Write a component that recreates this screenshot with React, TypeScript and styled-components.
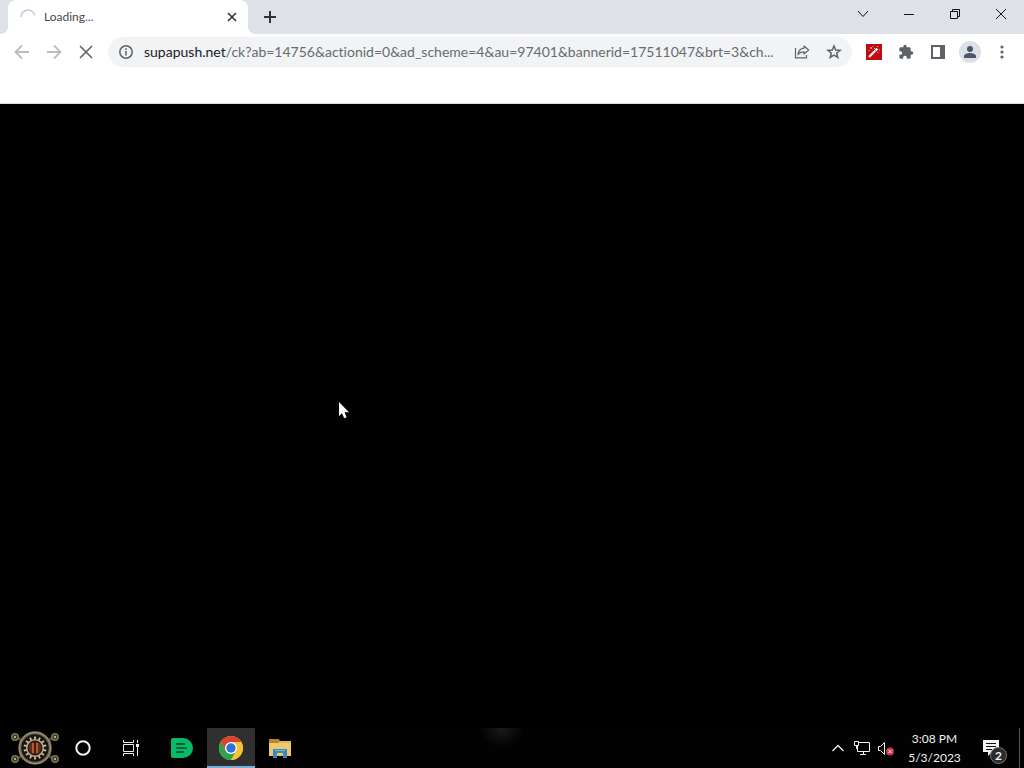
import React from "react";
import styled, { createGlobalStyle } from "styled-components";

const GlobalStyle = createGlobalStyle`
  *, *::before, *::after { box-sizing: border-box; }
  body {
    margin: 0;
    background: #000;
    font-family: Lato, "Open Sans", sans-serif;
    font-variant-ligatures: none;
  }
  button, input { font: inherit; color: inherit; font-variant-ligatures: none; }
`;

const Screen = styled.div`
  display: flex;
  flex-direction: column;
  min-height: 100vh;
`;

const TabStrip = styled.header`
  display: flex;
  align-items: stretch;
  height: 34px;
  padding-left: 8px;
  background: #dee1e6;
`;

const Tab = styled.div`
  position: relative;
  display: flex;
  align-items: center;
  gap: 8px;
  width: 240px;
  padding: 0 8px 0 12px;
  border-radius: 8px 8px 0 0;
  background: #fff;
  color: #45484c;
  font-size: 12px;
  line-height: 16px;

  &::before,
  &::after {
    content: "";
    position: absolute;
    bottom: 0;
    width: 8px;
    height: 8px;
  }
  &::before {
    right: 100%;
    background: radial-gradient(circle at 0 0, transparent 8px, #fff 8px);
  }
  &::after {
    left: 100%;
    background: radial-gradient(circle at 100% 0, transparent 8px, #fff 8px);
  }
`;

const TabTitle = styled.span`
  flex: 1;
`;

const IconButton = styled.button<{ $size?: number; $color?: string }>`
  display: flex;
  flex: none;
  align-items: center;
  justify-content: center;
  width: ${(p) => p.$size ?? 28}px;
  height: ${(p) => p.$size ?? 28}px;
  padding: 0;
  border: 0;
  border-radius: 50%;
  background: none;
  color: ${(p) => p.$color ?? "#5f6368"};
`;

const NewTab = styled(IconButton)`
  align-self: center;
  margin-left: 8px;
`;

const WindowControls = styled.div`
  display: flex;
  height: 28px;
  margin-left: auto;
`;

const WindowButton = styled.button`
  display: flex;
  align-items: center;
  justify-content: center;
  width: 46px;
  padding: 0;
  border: 0;
  background: none;
  color: #111;
`;

const Toolbar = styled.nav`
  display: flex;
  align-items: center;
  gap: 4px;
  height: 36px;
  padding: 0 8px;
  background: #fff;
`;

const Omnibox = styled.form`
  display: flex;
  flex: 1;
  align-items: center;
  gap: 4px;
  min-width: 0;
  height: 30px;
  margin: 0 4px;
  padding: 0 4px;
  border-radius: 15px;
  background: #f1f3f4;
`;

const Address = styled.div`
  display: flex;
  flex: 1;
  align-items: center;
  min-width: 0;
  font-size: 14px;
  line-height: 20px;
`;

const Host = styled.label`
  color: #202124;
`;

const Path = styled.input`
  flex: 1;
  min-width: 0;
  height: 20px;
  padding: 0;
  border: 0;
  outline: 0;
  background: none;
  color: #686c70;
  text-overflow: ellipsis;
`;

const BookmarksBar = styled.div`
  height: 34px;
  background: #fff;
  border-bottom: 1px solid #dadce0;
`;

const Page = styled.main`
  position: relative;
  flex: 1;
  background: #000;
`;

const Pointer = styled.svg`
  position: absolute;
  left: 338px;
  top: 297px;
`;

const Taskbar = styled.footer`
  display: flex;
  height: 40px;
  background: radial-gradient(ellipse 22px 20px at 49% 0, #1b1a18, transparent) #020202;
  color: #f2f2f2;
`;

const TaskButton = styled.button<{ $width?: number; $active?: boolean }>`
  display: flex;
  flex: none;
  align-items: center;
  justify-content: center;
  width: ${(p) => p.$width ?? 48}px;
  padding: 0;
  border: 0;
  background: ${(p) => (p.$active ? "#303030" : "none")};
  box-shadow: ${(p) => (p.$active ? "inset 0 -2px #76aee0" : "none")};
`;

const StartButton = styled(TaskButton)`
  justify-content: flex-end;
`;

const Apps = styled.div`
  display: flex;
  gap: 1px;
  padding-left: 3px;
`;

const Tray = styled.div`
  display: flex;
  margin-left: auto;
`;

const Clock = styled(TaskButton)`
  flex-direction: column;
  font-size: 12px;
  line-height: 19px;
`;

const ShowDesktop = styled.button`
  width: 5px;
  padding: 0;
  border: 0;
  border-left: 1px solid #555;
  background: none;
`;

const Notice = styled.span`
  position: relative;
  display: flex;
  width: 24px;
  height: 18px;
`;

const Badge = styled.span`
  position: absolute;
  right: 0;
  bottom: -7px;
  width: 17px;
  height: 17px;
  border: 1px solid #777;
  border-radius: 50%;
  background: #2b2b2b;
  font-size: 12px;
  font-weight: 700;
  line-height: 15px;
  text-align: center;
`;

const stroke = (width: number) => ({
  fill: "none",
  stroke: "currentColor",
  strokeWidth: width,
});

const Spinner = () => (
  <svg width="16" height="16" viewBox="0 0 16 16" fill="none" stroke="#c6cce0" strokeWidth="1.6">
    <path d="M1 8A7 7 0 0 1 14.8 6.4" />
  </svg>
);

const Cross = ({ size, width }: { size: number; width: number }) => (
  <svg width={size} height={size} viewBox={`0 0 ${size} ${size}`} {...stroke(width)}>
    <path d={`M1 1L${size - 1} ${size - 1}M${size - 1} 1L1 ${size - 1}`} />
  </svg>
);

const Arrow = ({ forward }: { forward?: boolean }) => (
  <svg width="16" height="16" viewBox="0 0 16 16" {...stroke(1.8)}>
    <path d={forward ? "M1 8H14M8 1.5L14.5 8L8 14.5" : "M15 8H2M8 1.5L1.5 8L8 14.5"} />
  </svg>
);

const StartGear = () => {
  const teeth = Array.from({ length: 14 }, (_, i) => (i * 360) / 14);
  const bolts = [[5, 6], [45, 6], [5, 28], [45, 28]];
  return (
    <svg width="50" height="36" viewBox="-1 -1 50 36" fill="none">
      <path d="M6 6L44 28M44 6L6 28" stroke="#4b4534" strokeWidth="3" />
      {bolts.map(([x, y]) => (
        <g key={`${x}-${y}`}>
          <circle cx={x} cy={y} r="3.2" fill="#343321" stroke="#777755" strokeWidth="1.5" />
          <circle cx={x} cy={y} r="1.2" fill="#b6ad82" />
        </g>
      ))}
      <circle cx="25" cy="17" r="15.2" fill="#171411" stroke="#746955" strokeWidth="3" />
      <circle cx="25" cy="17" r="15.8" stroke="#a4987f" strokeWidth="1" />
      <g stroke="#cdbf9e" strokeWidth="1.8">
        {teeth.map((a) => (
          <path key={a} d="M25 5.5V9" transform={`rotate(${a} 25 17)`} />
        ))}
      </g>
      <circle cx="25" cy="17" r="8.3" stroke="#b5a580" strokeWidth="1.6" />
      <circle cx="25" cy="17" r="6.4" fill="#5e2c1c" />
      <path d="M23 12V22M27 12V22" stroke="#b8582f" strokeWidth="2" />
      <path d="M25 10.500V23.500" stroke="#241411" strokeWidth="1.2" />
    </svg>
  );
};

const ChromeLogo = () => (
  <svg width="24" height="24" viewBox="0 0 24 24">
    <circle cx="12" cy="12" r="12" fill="#f5c334" />
    <path d="M1.61 6A12 12 0 0 1 22.39 6H12L6.8 15Z" fill="#d84432" />
    <path d="M1.61 6A12 12 0 0 0 12 24L17.2 15H6.8Z" fill="#2fa14f" />
    <path d="M12 24A12 12 0 0 0 22.39 6H12L17.2 15Z" fill="#f5c334" />
    <circle cx="12" cy="12" r="6" fill="#fff" />
    <circle cx="12" cy="12" r="4.7" fill="#2f72d8" />
  </svg>
);

export default function App() {
  return (
    <>
      <GlobalStyle />
      <Screen>
        <TabStrip>
          <Tab>
            <Spinner />
            <TabTitle>Loading...</TabTitle>
            <IconButton $size={16} $color="#303236" aria-label="Close tab">
              <Cross size={10} width={1.6} />
            </IconButton>
          </Tab>
          <NewTab $color="#303236" aria-label="New tab">
            <svg width="12" height="12" viewBox="0 0 12 12" {...stroke(2)}>
              <path d="M6 0V12M0 6H12" />
            </svg>
          </NewTab>
          <WindowControls>
            <WindowButton aria-label="Search tabs">
              <svg width="12" height="8" viewBox="0 0 12 8" {...stroke(1)}>
                <path d="M1 1L6 6.5L11 1" />
              </svg>
            </WindowButton>
            <WindowButton aria-label="Minimize">
              <svg width="10" height="2" viewBox="0 0 10 2" {...stroke(1)}>
                <path d="M0 1.5H10" />
              </svg>
            </WindowButton>
            <WindowButton aria-label="Restore">
              <svg width="10" height="10" viewBox="0 0 10 10" {...stroke(1)}>
                <path d="M0.5 2.5H7.5V9.5H0.5ZM2.5 2.5V0.5H9.5V7.5H7.5" />
              </svg>
            </WindowButton>
            <WindowButton aria-label="Close">
              <Cross size={12} width={1} />
            </WindowButton>
          </WindowControls>
        </TabStrip>

        <Toolbar>
          <IconButton $color="#bdbdbd" aria-label="Back"><Arrow /></IconButton>
          <IconButton $color="#bdbdbd" aria-label="Forward"><Arrow forward /></IconButton>
          <IconButton aria-label="Stop loading"><Cross size={14} width={1.6} /></IconButton>
          <Omnibox onSubmit={(e) => e.preventDefault()}>
            <IconButton type="button" aria-label="Site information">
              <svg width="14" height="14" viewBox="0 0 14 14" {...stroke(1.5)}>
                <circle cx="7" cy="7" r="6.2" />
                <path d="M7 6V10.5M7 3.3V5" />
              </svg>
            </IconButton>
            <Address>
              <Host htmlFor="address">supapush.net</Host>
              <Path
                id="address"
                defaultValue="/ck?ab=14756&actionid=0&ad_scheme=4&au=97401&bannerid=17511047&brt=3&ch..."
              />
            </Address>
            <IconButton type="button" aria-label="Share">
              <svg width="16" height="16" viewBox="0 0 16 16" {...stroke(1.2)}>
                <path d="M1.5 4V13.8H12.5V11" />
                <path d="M10 2L14.7 6L10 10V7.8C7.2 7.8 5.4 8.6 4 10.8C4.4 7.2 6.4 4.6 10 4.2Z" strokeLinejoin="round" />
              </svg>
            </IconButton>
            <IconButton type="button" aria-label="Bookmark">
              <svg width="16" height="16" viewBox="0 0 16 16" {...stroke(1.5)}>
                <path d="M8 2L9.7 6.1L14.1 6.4L10.7 9.2L11.8 13.5L8 11.2L4.2 13.5L5.3 9.2L1.9 6.4L6.3 6.1Z" />
              </svg>
            </IconButton>
          </Omnibox>
          <IconButton aria-label="Magic wand extension">
            <svg width="16" height="16" viewBox="0 0 16 16">
              <path d="M0 0H16V16H0Z" fill="#bd0d12" />
              <path d="M3 13L9.5 6.5" stroke="#ffe8d2" strokeWidth="2.4" />
              <path d="M9.7 6.3L11.3 4.7" stroke="#fff" strokeWidth="2.4" />
              <path d="M4 4H6M5 3V5M7 2V3M8 4L9 5M12 2L11 3M13 6H14M12 8V9M3 6V7" stroke="#f4a49c" strokeWidth="1" />
            </svg>
          </IconButton>
          <IconButton aria-label="Extensions">
            <svg width="16" height="16" viewBox="0 0 24 24" fill="currentColor">
              <path d="M20.5 11H19V7c0-1.1-.9-2-2-2h-4V3.500a2.500 2.500 0 0 0-5 0V5H4c-1.100 0-1.990.9-1.990 2v3.800H3.500c1.490 0 2.700 1.210 2.700 2.700s-1.210 2.700-2.700 2.700H2V20c0 1.100.9 2 2 2h3.800v-1.500c0-1.490 1.210-2.700 2.700-2.700s2.700 1.210 2.700 2.700V22H17c1.100 0 2-.9 2-2v-4h1.500a2.500 2.500 0 0 0 0-5z" />
            </svg>
          </IconButton>
          <IconButton aria-label="Side panel">
            <svg width="14" height="14" viewBox="0 0 14 14">
              <path d="M1 1H13V13H1Z" fill="#fff" stroke="#5f6368" strokeWidth="2" />
              <path d="M9 0H14V14H9Z" fill="#5f6368" />
            </svg>
          </IconButton>
          <IconButton aria-label="Profile">
            <svg width="22" height="22" viewBox="0 0 22 22">
              <circle cx="11" cy="11" r="11" fill="#dde0e6" />
              <g fill="#4b5667">
                <circle cx="11" cy="8" r="3" />
                <path d="M5 17V15C5 12.900 9 12 11 12S17 12.900 17 15V17Z" />
              </g>
            </svg>
          </IconButton>
          <IconButton aria-label="Menu">
            <svg width="4" height="14" viewBox="0 0 4 14" fill="currentColor">
              <circle cx="2" cy="2" r="1.600" />
              <circle cx="2" cy="7" r="1.600" />
              <circle cx="2" cy="12" r="1.600" />
            </svg>
          </IconButton>
        </Toolbar>
        <BookmarksBar />

        <Page>
          <Pointer width="12" height="19" viewBox="0 0 12 19" fill="#fff">
            <path d="M1 1V15L4 12.200L6.200 17.300L8.600 16.300L6.500 11.300H11Z" />
          </Pointer>
        </Page>

        <Taskbar>
          <StartButton $width={59} aria-label="Start">
            <StartGear />
          </StartButton>
          <TaskButton aria-label="Search">
            <svg width="16" height="16" viewBox="0 0 16 16" {...stroke(2)}>
              <circle cx="8" cy="8" r="6.700" />
            </svg>
          </TaskButton>
          <TaskButton aria-label="Task view">
            <svg width="16" height="16" viewBox="0 0 16 16" {...stroke(1)}>
              <path d="M0.500 0V2.500H10.500V0M0.500 4.500H10.500V11.500H0.500ZM0.500 16V13.500H10.500V16M14.500 0V3M14.500 7V16" />
              <path d="M13 4H16V7H13Z" fill="currentColor" stroke="none" />
            </svg>
          </TaskButton>
          <Apps>
            <TaskButton aria-label="Documents">
              <svg width="22" height="20" viewBox="0 0 22 20">
                <path d="M2 0H12A10 10 0 0 1 12 20H2Q0 20 0 18V2Q0 0 2 0Z" fill="#08b86a" />
                <path d="M5 6H14M5 10H16M5 14H13" stroke="#07452c" strokeWidth="1.500" />
              </svg>
            </TaskButton>
            <TaskButton $active aria-label="Chrome"><ChromeLogo /></TaskButton>
            <TaskButton aria-label="File Explorer">
              <svg width="22" height="20" viewBox="0 0 22 20">
                <path d="M0 1H9L11 3H22V18H0Z" fill="#e0b45a" />
                <path d="M0 1H9L11 3L9 5H0Z" fill="#bd8424" />
                <path d="M0 5H22V18H0Z" fill="#ebc973" />
                <path d="M4 20V11H18V20H14V15H8V20Z" fill="#3f86b8" />
                <path d="M6 12.500H16" stroke="#72b7df" strokeWidth="1" />
              </svg>
            </TaskButton>
          </Apps>
          <Tray>
            <TaskButton $width={24} aria-label="Show hidden icons">
              <svg width="12" height="8" viewBox="0 0 12 8" {...stroke(1.300)}>
                <path d="M0.500 7L6 1.500L11.500 7" />
              </svg>
            </TaskButton>
            <TaskButton $width={24} aria-label="Network">
              <svg width="16" height="14" viewBox="0 0 16 14" {...stroke(1)}>
                <path d="M5 1.500H15.500V10.500H3.500V5M9.500 10.500V13.500M6 13.500H12M0.500 0.500H4.500V4.500H0.500ZM2.500 5V8" />
              </svg>
            </TaskButton>
            <TaskButton $width={24} aria-label="Volume muted">
              <svg width="16" height="16" viewBox="0 0 16 16" {...stroke(1)}>
                <path d="M0.500 6.500H2.500L6.500 2.500V14.500L2.500 10.500H0.500Z" />
                <circle cx="12" cy="11.500" r="4" fill="#c43848" stroke="none" />
                <path d="M10.200 9.700L13.800 13.300M13.800 9.700L10.200 13.300" />
              </svg>
            </TaskButton>
            <Clock $width={73}>
              <span>3:08 PM</span>
              <span>5/3/2023</span>
            </Clock>
            <TaskButton aria-label="Notifications">
              <Notice>
                <svg width="18" height="18" viewBox="0 0 18 18">
                  <path d="M0 1H16V13H9L5 17V13H0Z" fill="#f2f2f2" />
                  <path d="M3 4.500H13M3 7.500H13M3 10.500H9" stroke="#111" strokeWidth="1" />
                </svg>
                <Badge>2</Badge>
              </Notice>
            </TaskButton>
            <ShowDesktop aria-label="Show desktop" />
          </Tray>
        </Taskbar>
      </Screen>
    </>
  );
}
